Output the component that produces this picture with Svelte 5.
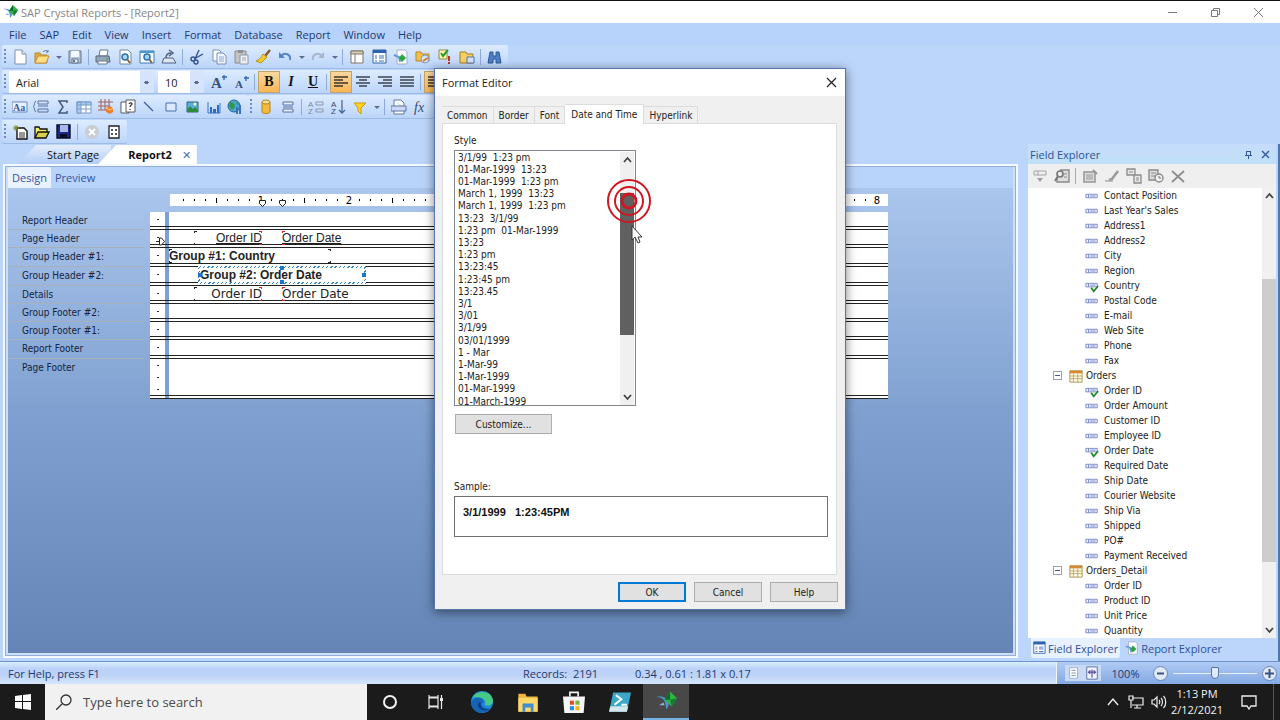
<script lang="ts">
  type Tool = { icon: string; label: string; on?: boolean };

  const icons: Record<string, string> = {
    crystal: '<path d="M1 5c5 0 7 3 7 9 1-1 2-2 2-4C9 6 6 4 1 5z" fill="#4f93c8"/><path d="M3 11l3-2 1 2z" fill="#8fb4e8"/><path d="M11 1l5 5-4 6-5-5z" fill="#2cb548"/><path d="M11 1v6l-4 0z" fill="#0c6b22"/><path d="M11 7l5-1-4 6z" fill="#12802b"/>',
    new: '<path d="M3 1h7l4 4v10H3z" fill="#fff" stroke="#7c8fb0"/><path d="M10 1v4h4" fill="#dfe8f7" stroke="#7c8fb0"/>',
    open: '<path d="M1 14V4h5l1 2h6v8z" fill="#e6a93c" stroke="#b98427"/><path d="M1 14l3-7h11l-3 7z" fill="#ffdf86" stroke="#c69334"/><path d="M9 3c2-2 4-2 5 0m0-2v2h-2" fill="none" stroke="#54719e"/>',
    save: '<path d="M2 2h12v12H2z" fill="#b4c2d6" stroke="#66758e"/><path d="M4 2h8v6H4z" fill="#f5f8fd"/><path d="M5 10h6v4H5z" fill="#e4eaf3" stroke="#66758e"/><path d="M6 11h2v2H6z" fill="#66758e"/>',
    print: '<path d="M5 1h8l-1 6H4z" fill="#fff" stroke="#6b7a94"/><path d="M1 7h13l1 6H1z" fill="#96a6bd" stroke="#56647c"/><path d="M3 12h9v3H3z" fill="#fff" stroke="#6b7a94"/><path d="M11 9h2v2h-2z" fill="#54b44c"/>',
    pagefind: '<path d="M3 1h8l3 3v11H3z" fill="#fff" stroke="#7488ac"/><circle cx="8" cy="8" r="3" fill="#a6d8f2" stroke="#2774ae" stroke-width="1.5"/><path d="M10 10l3 4" stroke="#8b6440" stroke-width="2"/>',
    preview: '<path d="M1 2h14v12H1z" fill="#fff" stroke="#3a7ab4"/><path d="M1 2h14v2H1z" fill="#4b97d1"/><circle cx="8" cy="8" r="3" fill="#9fd5ef" stroke="#2774ae" stroke-width="1.5"/><path d="M10 10l3 4" stroke="#8b6440" stroke-width="2"/>',
    export: '<path d="M3 9h9l3 5H1z" fill="#dfe7f2" stroke="#4f6284"/><path d="M5 9c0-4 2-5 5-5m-2-3l4 3-4 3" fill="none" stroke="#4f6284" stroke-width="1.5"/>',
    cut: '<path d="M10 1L6 10M14 5L5 10" stroke="#35548c" stroke-width="1.4"/><circle cx="4" cy="10" r="2" fill="none" stroke="#35548c" stroke-width="1.4"/><circle cx="7" cy="13" r="2" fill="none" stroke="#35548c" stroke-width="1.4"/>',
    copy: '<path d="M2 1h6l2 2v9H2z" fill="#fff" stroke="#7b90b6"/><path d="M6 4h6l3 3v8H6z" fill="#f1f6ff" stroke="#7b90b6"/><path d="M8 8h5M8 10h5M8 12h5" stroke="#8ea6cf"/>',
    paste: '<path d="M2 2h11v12H2z" fill="#c5c4c0" stroke="#8c8d90"/><path d="M5 1h5v3H5z" fill="#8c9096"/><path d="M7 6h8v9H7z" fill="#eceef2" stroke="#9199a8"/><path d="M9 9h4M9 11h4" stroke="#a3a9b5"/>',
    brush: '<path d="M15 1l-5 6" stroke="#8a5b2c" stroke-width="2.5"/><path d="M8 5l4 3-6 6-5-2c3-1 5-3 7-7z" fill="#f4cc2c" stroke="#b8911c"/>',
    undo: '<path d="M4 7c4-4 10-2 9 4" fill="none" stroke="#5784cf" stroke-width="2"/><path d="M2 3v6h6z" fill="#5784cf"/>',
    redo: '<path d="M12 7C8 3 2 5 3 11" fill="none" stroke="#a9b5c9" stroke-width="2"/><path d="M14 3v6H8z" fill="#a9b5c9"/>',
    grid: '<path d="M2 2h12v12H2z" fill="#fff" stroke="#817767"/><path d="M2 2h12v3H2z" fill="#d9cfb8" stroke="#817767"/><path d="M6 5v9" stroke="#817767"/>',
    fields: '<path d="M2 1h13v13H2z" fill="#fff" stroke="#2f62ae"/><path d="M2 1h13v3H2z" fill="#2f62ae"/><path d="M4 7h2M4 9h2M4 12h2" stroke="#3d70b5"/><path d="M8 7h5M8 9h5M8 12h5" stroke="#3d70b5"/>',
    repexp: '<path d="M4 1h8l2 2v12H4z" fill="#fff" stroke="#a3aec4"/><path d="M1 6l5 2 1 5" fill="none" stroke="#6a9ad4" stroke-width="2"/><path d="M9 5l4 4-4 4-3-4z" fill="#27a63b"/>',
    repository: '<path d="M1 3h5l1 2h7v7H1z" fill="#f2c14c" stroke="#b88624"/><circle cx="10" cy="10" r="4" fill="#d7e4f4" stroke="#8797b0"/><path d="M8 12l5-3" stroke="#d08024" stroke-width="2"/>',
    depend: '<path d="M2 1h8v9H2z" fill="#fff6b0" stroke="#8e8b3a"/><path d="M4 4l2 3 5-6" fill="none" stroke="#2d9a35" stroke-width="2"/><path d="M12 7v5M12 13v2" stroke="#c62f2c" stroke-width="2"/>',
    workbench: '<path d="M1 3h6l1 2h6v9H1z" fill="#f6cf66" stroke="#a97b22"/><path d="M8 8h7v6H8z" fill="#d3e4fa" stroke="#4f75b4"/>',
    find: '<path d="M3 3h3v4h3V3h3l2 11H9v-4H6v4H1z" fill="#4f80c5" stroke="#2e5899"/>',
    grow: '<text x="0" y="14" font-family="Liberation Serif" font-weight="bold" font-size="15" fill="#35527f">A</text><path d="M13 1v5M11 3h5" stroke="#2e66ad" stroke-width="1.3"/>',
    shrink: '<text x="2" y="14" font-family="Liberation Serif" font-weight="bold" font-size="11" fill="#35527f">A</text><path d="M13 2v5M11 4h5" stroke="#2e66ad" stroke-width="1.3"/>',
    left: '<path d="M1 3h14M1 6h9M1 9h14M1 12h9" stroke="#3b372f" stroke-width="1.6"/>',
    center: '<path d="M1 3h14M4 6h8M1 9h14M4 12h8" stroke="#3c4452" stroke-width="1.6"/>',
    right: '<path d="M1 3h14M6 6h9M1 9h14M6 12h9" stroke="#3c4452" stroke-width="1.6"/>',
    justify: '<path d="M1 3h14M1 6h14M1 9h14M1 12h14" stroke="#3c4452" stroke-width="1.6"/>',
    text: '<path d="M0 3h15v10H0z" fill="#e9f1ff" stroke="#6a88c0"/><text x="1" y="12" font-family="Liberation Serif" font-size="10" font-weight="bold" fill="#3b5fa4">Aa</text>',
    group: '<path d="M5 2h10v3H5zM5 7h10M5 10h10v3H5zM3 2c-2 0-1 5-3 5.500 2 0 1 5.500 3 5.500" fill="none" stroke="#58709c"/>',
    sum: '<path d="M12 4V2H4l4 6-4 6h8v-2" fill="none" stroke="#41597f" stroke-width="1.5"/>',
    crosstab: '<path d="M1 3h14v11H1z" fill="#fff" stroke="#7b9cc8"/><path d="M1 3h14v3H1zM1 3h4v11H1z" fill="#a5cbee" stroke="#7b9cc8"/><path d="M10 3v11M1 10h14" stroke="#7b9cc8"/>',
    olap: '<path d="M3 0v11M7 0v11M11 0v8M0 3h15M0 7h12M0 11h8" stroke="#9e605a"/><path d="M8 9l4-2 3 2v4l-3 2-4-2z" fill="#ee7e2c"/><path d="M8 9l4 2 3-2" fill="none" stroke="#fbcf9d"/>',
    sub: '<path d="M1 3h8v11H1z" fill="#fff" stroke="#595a5c"/><path d="M6 1h9v12H6z" fill="#fff" stroke="#595a5c"/><path d="M9 5c1-2 3-1 3 0s-2 1-2 3M10 10v1" fill="none" stroke="#333" stroke-width="1.300"/>',
    line: '<path d="M3 3l9 9" stroke="#3c5ca0" stroke-width="1.3"/>',
    box: '<path d="M3 4h10v8H3z" fill="#dce9ff" stroke="#4a6cb2"/>',
    picture: '<path d="M3 3h11v10H3z" fill="#58b1df" stroke="#31637c"/><path d="M3 11l3-4 3 3 2-2 3 3v2H3z" fill="#2e8a3d"/><circle cx="11" cy="5" r="1.500" fill="#fff6a4"/>',
    chart: '<path d="M2 3v11h12V4" fill="none" stroke="#3c73bc"/><path d="M4 8h2v6H4zM7 10h3v4H7zM11 6h2v8h-2z" fill="#2a6cc2"/>',
    map: '<circle cx="7" cy="7" r="6" fill="#48a7db" stroke="#25658e"/><path d="M3 3l4 1 1 4-3 3-3-4zM9 2l3 3-2 1z" fill="#33984a"/><path d="M9 8h2v7H9zM12 6h2v9h-2z" fill="#3c6fb4"/>',
    db: '<path d="M4 3v10c0 2 8 2 8 0V3z" fill="#f3bc3d" stroke="#b3811e"/><ellipse cx="8" cy="3" rx="4" ry="2" fill="#ffe59a" stroke="#b3811e"/>',
    section: '<path d="M3 3h10v3H3zM3 8h10M3 10h10v3H3z" fill="#e3edff" stroke="#5a71a2"/>',
    gsort: '<text x="0" y="8" font-family="Liberation Sans" font-size="8" fill="#7b879d">A</text><text x="0" y="15" font-family="Liberation Sans" font-size="8" fill="#7b879d">Z</text><path d="M8 3h7v3H8zM8 10h7v3H8z" fill="none" stroke="#8b97ac"/>',
    sort: '<text x="1" y="8" font-family="Liberation Sans" font-size="8" fill="#34496d">A</text><text x="1" y="15" font-family="Liberation Sans" font-size="8" fill="#34496d">Z</text><path d="M12 1v13M9 11l3 3 3-3" fill="none" stroke="#4a679a" stroke-width="1.300"/>',
    filter: '<path d="M2 4h12l-5 5v6l-3-3V9z" fill="#ffd21e" stroke="#c99a12"/>',
    hyper: '<path d="M3 1h7l3 3v4M13 12v3H3V1" fill="#fff" stroke="#63789e"/><path d="M0 7h15v5H0z" fill="#cbdaf1" stroke="#5a74a6"/>',
    fx: '<text x="1" y="13" font-family="Liberation Serif" font-style="italic" font-size="14" fill="#3d4b66">fx</text>',
    wnew: '<path d="M5 4h7l3 3v8H5z" fill="#fff" stroke="#111" stroke-width="1.400"/><path d="M7 9h6M7 11h6M7 13h6" stroke="#333"/><path d="M4 1v6M1 4h6M2 2l4 4M6 2L2 6" stroke="#7f8a28"/>',
    wopen: '<path d="M1 14V3h4l1 2h7v3" fill="#f5ee6a" stroke="#111" stroke-width="1.300"/><path d="M1 14l3-6h11l-3 6z" fill="#d8cf4c" stroke="#111" stroke-width="1.300"/>',
    wsave: '<path d="M1 1h13v13H1z" fill="#1a2a86" stroke="#0a0a26" stroke-width="1.400"/><path d="M4 1h8v7H4z" fill="#a9b8e8"/><path d="M4 10h7v4H4z" fill="#0b0b22"/>',
    stop: '<circle cx="8" cy="8" r="7" fill="#c9ccd1"/><path d="M5 5l6 6M11 5l-6 6" stroke="#fff" stroke-width="2"/>',
    props: '<path d="M3 2h10v12H3z" fill="#fff" stroke="#222" stroke-width="1.300"/><path d="M5 6h2M5 10h2M9 6h2M9 10h2" stroke="#222" stroke-width="1.500"/>',
    insert: '<path d="M2 3h12v4H2zM6 3v4" fill="none" stroke="#a3a3a3"/><path d="M5 10h6l-3 4z" fill="#9d9d9d"/>',
    browse: '<path d="M6 2h9v12H3V9" fill="#ddd" stroke="#8c8c8c" stroke-width="1.400"/><path d="M10 6h3M10 9h3" stroke="#8c8c8c"/><circle cx="6" cy="6" r="3" fill="#eee" stroke="#777" stroke-width="1.700"/><path d="M4 8l-3 5" stroke="#777" stroke-width="2"/>',
    addform: '<path d="M2 4h11v10H2z" fill="#ddd" stroke="#969696" stroke-width="1.500"/><path d="M4 7h7M4 9h7M4 11h7" stroke="#999"/><path d="M11 2l4 4" stroke="#999" stroke-width="2"/>',
    edit: '<path d="M14 3l-6 8-3 1" fill="none" stroke="#999" stroke-width="2.500"/><path d="M1 13h8" stroke="#aaa" stroke-width="1.500"/>',
    dup: '<path d="M1 1h8v6H1zM8 7h7v8H8z" fill="#e6e6e6" stroke="#8b8b8b" stroke-width="1.300"/><path d="M3 4h4M10 10h3M10 12h3" stroke="#8b8b8b"/>',
    rename: '<path d="M1 2h9v10H1z" fill="#ddd" stroke="#8b8b8b" stroke-width="1.400"/><path d="M3 5h5M3 8h5" stroke="#8b8b8b"/><circle cx="11" cy="10" r="4" fill="#f0f0f0" stroke="#8b8b8b" stroke-width="1.400"/><path d="M11 8v2h2" fill="none" stroke="#777"/>',
    del: '<path d="M2 3l12 11M14 3L2 14" stroke="#8c8c8c" stroke-width="1.700"/>',
    field: '<path d="M1 6h13v4H1z" fill="#eaf0ff" stroke="#7384c4"/><path d="M4 6v4M6 8h6" stroke="#7384c4"/>',
    checked: '<path d="M1 5h13v4H1z" fill="#eaf0ff" stroke="#7384c4"/><path d="M4 5v4M6 7h6" stroke="#7384c4"/><path d="M7 10l3 4 5-6" fill="none" stroke="#1f8a2b" stroke-width="2"/>',
    table: '<path d="M1 2h14v13H1z" fill="#fffde8" stroke="#a48a48"/><path d="M1 2h14v3H1z" fill="#d58a32"/><path d="M1 8h14M1 11h14M5 5v10M10 5v10" stroke="#b9a565"/>',
    ring: '<circle cx="8" cy="8" r="6" fill="none" stroke="#f2f2f2" stroke-width="2"/>',
    taskview: '<path d="M1 4h9v8H1zM1 1v2h9V1M1 15v-2h9v2" fill="none" stroke="#e6e6e6" stroke-width="1.200"/><path d="M13.500 1v14" stroke="#e6e6e6" stroke-width="1.200"/><path d="M12 4h3v3h-3z" fill="#e6e6e6"/>',
    edge: '<circle cx="8" cy="8" r="8" fill="#1c87d6"/><path d="M1 5c3-6 14-6 15 2 0 4-5 4-6 3 2-4-4-7-9-5z" fill="#45c985"/><path d="M0 9c1-5 9-5 9-1-2 1-2 5 5 5-4 5-13 3-14-4z" fill="#1464b4"/><path d="M7 8c-1 4 3 6 7 5-3 2-9 1-9-3 0-1 1-2 2-2z" fill="#0b3f86"/>',
    folder: '<path d="M1 2h5l1 2h8v11H1z" fill="#f0b53c"/><path d="M1 5h14v10H1z" fill="#ffd869"/><path d="M4 15V9h8v6h-2v-3H6v3z" fill="#3f8ed1"/>',
    store: '<path d="M5 4V1h6v3" fill="none" stroke="#f3f3f3" stroke-width="1.200"/><path d="M0 4h16l-1 12H1z" fill="#f5f5f5"/><path d="M5 7h3v3H5z" fill="#e34f2f"/><path d="M9 7h3v3H9z" fill="#7db53a"/><path d="M5 11h3v3H5z" fill="#2b8fdb"/><path d="M9 11h3v3H9z" fill="#f5b322"/>',
    shell: '<path d="M3 1h13l-3 14H0z" fill="#3aa9c9"/><path d="M1 11h13l-1 4H0z" fill="#d5e6ed"/><path d="M5 3l4 3-5 4M9 10h4" fill="none" stroke="#fff" stroke-width="1.400"/>',
    up: '<path d="M3 11l5-6 5 6" fill="none" stroke="#eee" stroke-width="1.400"/>',
    net: '<path d="M4 4h11v7H4M9 11v3M6 14h7M1 2h4v4H1zM3 6v8" fill="none" stroke="#eee" stroke-width="1.200"/>',
    volume: '<path d="M1 6h2l3-3v10l-3-3H1z" fill="none" stroke="#eee" stroke-width="1.200"/><path d="M8 6c1 1 1 3 0 4M10 4c2 2 2 6 0 8M12.500 2c3 3 3 9 0 12" fill="none" stroke="#eee" stroke-width="1.200"/>',
    notice: '<path d="M1 2h14v10h-5l-2 3-2-3H1z" fill="none" stroke="#eee" stroke-width="1.300"/>',
    search: '<circle cx="10" cy="6" r="5" fill="none" stroke="#333" stroke-width="1.300"/><path d="M6 10l-6 6" stroke="#333" stroke-width="1.300"/>',
    windows: '<path d="M0 2l7-1v6H0zM8 1l8-1v7H8zM0 8h7v7l-7-1zM8 8h8v8l-8-1z" fill="#fff"/>',
    page: '<path d="M3 2h9v12H3z" fill="#fff" stroke="#9aabca"/><path d="M5 5h5M5 8h5M5 11h5" stroke="#6f88b8"/>',
    pagefit: '<path d="M2 1h12v14H2z" fill="#f1f5ff" stroke="#51679a"/><path d="M4 7h8M8 4v9M6 5L4 7l2 2M10 5l2 2-2 2" fill="none" stroke="#5a4c9c" stroke-width="1.300"/>'
  };

  const menus = ['File', 'SAP', 'Edit', 'View', 'Insert', 'Format', 'Database', 'Report', 'Window', 'Help'];

  // '|' draws a separator, 'v' a drop-down arrow
  const standard: (Tool | string)[] = [
    { icon: 'new', label: 'New' }, { icon: 'open', label: 'Open' }, 'v', { icon: 'save', label: 'Save' }, '|',
    { icon: 'print', label: 'Print' }, { icon: 'pagefind', label: 'Print preview' },
    { icon: 'preview', label: 'HTML preview' }, { icon: 'export', label: 'Export' }, '|',
    { icon: 'cut', label: 'Cut' }, { icon: 'copy', label: 'Copy' }, { icon: 'paste', label: 'Paste' },
    { icon: 'brush', label: 'Format painter' }, { icon: 'undo', label: 'Undo' }, 'v',
    { icon: 'redo', label: 'Redo' }, 'v', '|',
    { icon: 'grid', label: 'Toggle group tree' }, { icon: 'fields', label: 'Field explorer' },
    { icon: 'repexp', label: 'Report explorer' }, { icon: 'repository', label: 'Repository explorer' },
    { icon: 'depend', label: 'Dependency checker' }, { icon: 'workbench', label: 'Workbench' }, '|',
    { icon: 'find', label: 'Find' }
  ];
  const sizing: Tool[] = [{ icon: 'grow', label: 'Increase font size' }, { icon: 'shrink', label: 'Decrease font size' }];
  const aligns: Tool[] = [
    { icon: 'left', label: 'Align left', on: true }, { icon: 'center', label: 'Align centre' },
    { icon: 'right', label: 'Align right' }, { icon: 'justify', label: 'Justify' }
  ];
  const objects: Tool[] = [
    { icon: 'text', label: 'Text object' }, { icon: 'group', label: 'Group' }, { icon: 'sum', label: 'Summary' },
    { icon: 'crosstab', label: 'Cross-tab' }, { icon: 'olap', label: 'OLAP grid' }, { icon: 'sub', label: 'Subreport' },
    { icon: 'line', label: 'Line' }, { icon: 'box', label: 'Box' }, { icon: 'picture', label: 'Picture' },
    { icon: 'chart', label: 'Chart' }, { icon: 'map', label: 'Map' }
  ];
  const experts: (Tool | string)[] = [
    { icon: 'db', label: 'Database expert' }, { icon: 'section', label: 'Section expert' }, '|',
    { icon: 'gsort', label: 'Group sort' }, { icon: 'sort', label: 'Record sort' }, { icon: 'filter', label: 'Select expert' }, 'v', '|',
    { icon: 'hyper', label: 'Hyperlink' }, { icon: 'fx', label: 'Formula workshop' }
  ];
  const wizard: (Tool | string)[] = [
    { icon: 'wnew', label: 'New document' }, { icon: 'wopen', label: 'Open document' }, { icon: 'wsave', label: 'Save document' }, '|',
    { icon: 'stop', label: 'Stop' }, { icon: 'props', label: 'Properties' }
  ];
  const fieldTools: (Tool | string)[] = [
    { icon: 'insert', label: 'Insert to report' }, { icon: 'browse', label: 'Browse data' }, '|',
    { icon: 'addform', label: 'New' }, { icon: 'edit', label: 'Edit' }, { icon: 'dup', label: 'Duplicate' },
    { icon: 'rename', label: 'Rename' }, { icon: 'del', label: 'Delete' }
  ];

  const sections = [
    { name: 'Report Header', height: 18 },
    { name: 'Page Header', height: 18 },
    { name: 'Group Header #1:', height: 19 },
    { name: 'Group Header #2:', height: 19 },
    { name: 'Details', height: 18 },
    { name: 'Group Footer #2:', height: 18 },
    { name: 'Group Footer #1:', height: 18 },
    { name: 'Report Footer', height: 19 },
    { name: 'Page Footer', height: 40 }
  ];

  const styles = [
    '3/1/99  1:23 pm', '01-Mar-1999  13:23', '01-Mar-1999  1:23 pm', 'March 1, 1999  13:23',
    'March 1, 1999  1:23 pm', '13:23  3/1/99', '1:23 pm  01-Mar-1999', '13:23', '1:23 pm', '13:23:45',
    '1:23:45 pm', '13:23.45', '3/1', '3/01', '3/1/99', '03/01/1999', '1 - Mar', '1-Mar-99', '1-Mar-1999',
    '01-Mar-1999', '01-March-1999'
  ].map((s) => s.replaceAll('  ', '\u00a0 '));

  const tree = [
    { fields: ['Contact Position', "Last Year's Sales", 'Address1', 'Address2', 'City', 'Region', 'Country', 'Postal Code', 'E-mail', 'Web Site', 'Phone', 'Fax'], used: ['Country'] },
    { table: 'Orders', fields: ['Order ID', 'Order Amount', 'Customer ID', 'Employee ID', 'Order Date', 'Required Date', 'Ship Date', 'Courier Website', 'Ship Via', 'Shipped', 'PO#', 'Payment Received'], used: ['Order ID', 'Order Date'] },
    { table: 'Orders_Detail', fields: ['Order ID', 'Product ID', 'Unit Price', 'Quantity'], used: [] as string[] }
  ];

  const tabs = ['Common', 'Border', 'Font', 'Date and Time', 'Hyperlink'];
  const apps = ['ring', 'taskview', 'edge', 'folder', 'store', 'shell', 'crystal'];

  let activeTab = $state('Date and Time');
  let zoom = $state(50);

  // eighths of an inch along the ruler, 11px each
  const ticks = Array.from({ length: 64 }, (_, i) => i + 1);
</script>

{#snippet icon(name: string, size = 16)}
  <svg class="icon" width={size} height={size} viewBox="0 0 16 16" aria-hidden="true">{@html icons[name]}</svg>
{/snippet}

{#snippet tools(items: (Tool | string)[])}
  {#each items as item}
    {#if item === '|'}
      <span class="sep"></span>
    {:else if item === 'v'}
      <button class="drop" aria-label="More"></button>
    {:else if typeof item !== 'string'}
      <button class="tool" class:on={item.on} aria-label={item.label}>{@render icon(item.icon)}</button>
    {/if}
  {/each}
{/snippet}

{#snippet chevron(d: string)}
  <svg width="9" height="9" viewBox="0 0 9 9" aria-hidden="true"><path {d} fill="none" stroke="#444" stroke-width="1.800" /></svg>
{/snippet}

<div class="screen">
  <header class="title-bar">
    {@render icon('crystal')}
    <span class="title">SAP Crystal Reports - [Report2]</span>
    <button aria-label="Minimize"><svg width="11" height="11"><path d="M1 5.500h9" stroke="#777" /></svg></button>
    <button aria-label="Restore"><svg width="11" height="11"><path d="M1.500 3.500h6v6h-6zM3.500 3V1.500h6v6H8" fill="none" stroke="#777" /></svg></button>
    <button aria-label="Close"><svg width="11" height="11"><path d="M1 1l9 9M10 1l-9 9" stroke="#777" /></svg></button>
  </header>

  <nav class="menu">
    {#each menus as item}
      <button>{item}</button>
    {/each}
  </nav>

  <div class="toolbars">
    <div class="bar"><span class="grip"></span>{@render tools(standard)}</div>
    <div class="bar">
      <span class="grip"></span>
      <select class="font-name" aria-label="Font"><option>Arial</option></select>
      <select class="font-size" aria-label="Font size"><option>10</option></select>
      {@render tools(sizing)}
      <span class="sep"></span>
      <button class="tool letter on"><b>B</b></button>
      <button class="tool letter"><i>I</i></button>
      <button class="tool letter"><u>U</u></button>
      <span class="sep"></span>
      {@render tools(aligns)}
      <span class="sep"></span>
      <button class="tool on" aria-label="Suppress">{@render icon('left')}</button>
    </div>
    <div class="bar-row">
      <div class="bar objects"><span class="grip"></span>{@render tools(objects)}</div>
      <div class="bar"><span class="grip"></span>{@render tools(experts)}</div>
    </div>
    <div class="bar"><span class="grip"></span>{@render tools(wizard)}</div>
  </div>

  <main>
    <section class="documents">
      <div class="doc-tabs">
        <button class="doc-tab">Start Page</button>
        <button class="doc-tab current">Report2 <span>✕</span></button>
      </div>
      <div class="frame">
        <div class="views">
          <button class="current">Design</button>
          <button>Preview</button>
        </div>
        <div class="canvas">
          <div class="ruler">
            <svg width="100%" height="12" aria-hidden="true">
              {#each ticks as t}
                {#if t % 8 === 0}
                  <text x={t * 11 + 3} y="10" text-anchor="middle">{t / 8}</text>
                {:else if t % 4 === 0}
                  <rect x={t * 11 + 2} y="4" width="1" height="5" />
                {:else}
                  <rect x={t * 11 + 2} y="5" width="1" height="2" />
                {/if}
              {/each}
            </svg>
            <svg class="stops" width="30" height="10" aria-hidden="true">
              <path d="M1.500 1.500h6v3l-3 3-3-3zM21.500 1.500h6v3l-3 3-3-3z" fill="#fff" stroke="#222" />
            </svg>
          </div>
          <div class="sections">
            {#each sections as s}
              <div class="section" style="height: {s.height}px">
                <span class="name">{s.name}</span>
                <span class="gutter">{#each Array(Math.floor(s.height / 12)) as _}<i></i>{/each}</span>
                <span class="paper"></span>
              </div>
            {/each}
            <svg class="handle" width="10" height="10" aria-hidden="true"><path d="M0 4.500h3M3.500 1v7h2l3-3.500-3-3.500z" fill="#fff" stroke="#222" /></svg>
            <span class="obj under number" style="left: 186px; top: 19px; width: 68px">Order ID</span>
            <span class="obj under date" style="left: 274px; top: 19px; width: 160px">Order Date</span>
            <span class="obj bold" style="left: 161px; top: 37px; width: 162px">Group #1: Country</span>
            <span class="obj bold selected" style="left: 190px; top: 54px; width: 168px">Group #2: Order Date</span>
            <span class="obj plain number" style="left: 186px; top: 75px; width: 68px">Order ID</span>
            <span class="obj plain date" style="left: 274px; top: 75px; width: 160px">Order Date</span>
          </div>
        </div>
      </div>
    </section>

    <aside>
      <div class="panel-title">
        <span>Field Explorer</span>
        <button aria-label="Pin"><svg width="9" height="9"><path d="M2.500 1v4M6.500 1v4M2 1.500h5M1 5.500h7M4.500 6v3" fill="none" stroke="#35589b" /></svg></button>
        <button aria-label="Close panel"><svg width="9" height="9"><path d="M1 1l7 7M8 1L1 8" stroke="#35589b" stroke-width="1.400" /></svg></button>
      </div>
      <div class="panel-tools">{@render tools(fieldTools)}</div>
      <div class="tree-box">
        <ul class="tree">
          {#each tree as group}
            {#if group.table}
              <li class="table-row">
                <button class="expander" aria-label="Collapse"></button>
                {@render icon('table', 14)}
                <span>{group.table}</span>
              </li>
            {/if}
            {#each group.fields as field}
              <li>{@render icon(group.used.includes(field) ? 'checked' : 'field', 14)}<span>{field}</span></li>
            {/each}
          {/each}
        </ul>
        <div class="scroll">
          {@render chevron('M1 6l3.500-4L8 6')}
          <div class="track"><span class="thumb tree-thumb"></span></div>
          {@render chevron('M1 3l3.500 4L8 3')}
        </div>
      </div>
      <div class="panel-tabs">
        <button class="current">{@render icon('fields', 14)}Field Explorer</button>
        <button>{@render icon('repexp', 14)}Report Explorer</button>
      </div>
    </aside>
  </main>

  <footer class="status">
    <span class="help">For Help, press F1</span>
    <span class="records">Records:&nbsp; 2191</span>
    <span class="coords">0.34 , 0.61 : 1.81 x 0.17</span>
    <div class="zoom">
      <button class="page" aria-label="Whole page">{@render icon('page', 14)}</button>
      <button class="page" aria-label="Page width">{@render icon('pagefit', 14)}</button>
      <span class="percent">100%</span>
      <button class="round" aria-label="Zoom out"><svg width="9" height="9"><path d="M1 4.500h7" stroke="#3d5480" stroke-width="2" /></svg></button>
      <input type="range" aria-label="Zoom" bind:value={zoom} />
      <button class="round" aria-label="Zoom in"><svg width="9" height="9"><path d="M0 4.500h9M4.500 0v9" stroke="#3d5480" stroke-width="2" /></svg></button>
    </div>
  </footer>

  <div class="taskbar">
    <button class="start" aria-label="Start">{@render icon('windows')}</button>
    <label class="search">
      {@render icon('search')}
      <input type="text" placeholder="Type here to search" aria-label="Search" />
    </label>
    {#each apps as app}
      <button class="app" class:running={app === 'crystal'} aria-label={app}>
        {@render icon(app, ['ring', 'taskview'].includes(app) ? 16 : 22)}
      </button>
    {/each}
    <div class="tray">
      <button aria-label="Hidden icons">{@render icon('up')}</button>
      <button aria-label="Network">{@render icon('net')}</button>
      <button aria-label="Volume">{@render icon('volume')}</button>
      <div class="clock">1:13 PM<br />2/12/2021</div>
      <button class="notice" aria-label="Notifications">{@render icon('notice')}</button>
    </div>
  </div>

  <div class="dialog" role="dialog" aria-label="Format Editor">
    <div class="dialog-title">
      <span>Format Editor</span>
      <button aria-label="Close dialog"><svg width="11" height="11"><path d="M1 1l9 9M10 1l-9 9" stroke="#222" stroke-width="1.200" /></svg></button>
    </div>
    <div class="dialog-tabs" role="tablist">
      {#each tabs as tab}
        <button role="tab" aria-selected={tab === activeTab} class:active={tab === activeTab} onclick={() => (activeTab = tab)}>{tab}</button>
      {/each}
    </div>
    <div class="tab-page">
      <label class="caption" for="style-list">Style</label>
      <div class="list-box">
        <select id="style-list" size="21">
          {#each styles as s}
            <option>{s}</option>
          {/each}
        </select>
        <div class="scroll">
          {@render chevron('M1 6l3.500-4L8 6')}
          <div class="track"><span class="thumb list-thumb"></span></div>
          {@render chevron('M1 3l3.500 4L8 3')}
        </div>
        <svg class="click" width="46" height="46" aria-hidden="true">
          <g fill="none" stroke="#cf1722" stroke-width="2"><circle cx="23" cy="23" r="21" /><circle cx="23" cy="23" r="14" /><circle cx="23" cy="23" r="7" stroke-width="3" /></g>
        </svg>
        <svg class="pointer" width="13" height="19" aria-hidden="true">
          <path d="M1 1v14l3-3 3 6 2-1-2-5h4z" fill="#fff" stroke="#333" />
        </svg>
      </div>
      <button class="push customize">Customize...</button>
      <span class="caption">Sample:</span>
      <output>3/1/1999&nbsp;&nbsp; 1:23:45PM</output>
    </div>
    <div class="actions">
      <button class="push default">OK</button>
      <button class="push">Cancel</button>
      <button class="push">Help</button>
    </div>
  </div>
</div>

<style>
  :global(body) {
    margin: 0;
  }

  .screen {
    --ui: 'Open Sans', 'Noto Sans', sans-serif;
    --small: 'DejaVu Sans Condensed', 'DejaVu Sans', sans-serif;
    position: relative;
    display: flex;
    flex-direction: column;
    min-height: 100vh;
    overflow: hidden;
    font-family: var(--ui);
    font-size: 11px;
    color: #1e3a70;
    background: #bcd5fb;
  }

  button {
    display: flex;
    align-items: center;
    justify-content: center;
    padding: 0;
    border: 0;
    background: none;
    font: inherit;
    color: inherit;
    white-space: nowrap;
  }

  svg {
    display: block;
    flex: none;
  }

  .title-bar {
    display: flex;
    align-items: center;
    height: 22px;
    padding-left: 2px;
    border-top: 1px solid #111;
    background: #fff;
    color: #868686;
  }

  .title {
    flex: 1;
    padding-left: 3px;
  }

  .title-bar button {
    width: 43px;
    height: 20px;
  }

  .menu {
    display: flex;
    align-items: center;
    gap: 1px;
    height: 22px;
    padding-left: 3px;
    background: #b7d2fb;
  }

  .menu button {
    padding: 0 6px;
  }

  .toolbars {
    display: flex;
    flex-direction: column;
    align-items: flex-start;
    gap: 1px;
    padding-left: 2px;
  }

  .bar-row {
    display: flex;
  }

  .bar {
    display: flex;
    align-items: center;
    height: 24px;
    padding-right: 2px;
    border-radius: 2px;
    box-shadow: inset 0 -1px #9dbbe6;
    background: linear-gradient(#dcebff, #c9defc 60%, #b9d3f8);
  }

  .objects {
    width: 244px;
  }

  .objects .tool {
    flex: 1;
  }

  .grip {
    width: 2px;
    height: 16px;
    margin: 0 3px 0 2px;
    background: repeating-linear-gradient(#6a8bc4 0 2px, transparent 2px 4px);
  }

  .tool {
    width: 22px;
    height: 22px;
  }

  .tool.on {
    background: linear-gradient(#fbd9a0, #f9b452);
    box-shadow: inset 0 0 0 1px #c1a36c;
  }

  .letter {
    font-family: 'Liberation Serif', serif;
    font-size: 14px;
    font-weight: bold;
    color: #111;
  }

  .drop {
    width: 11px;
    height: 22px;
  }

  .drop::before {
    content: '';
    border: 3px solid transparent;
    border-top-color: #5d6f91;
    border-bottom: 0;
  }

  .sep {
    flex: none;
    width: 1px;
    height: 16px;
    margin: 0 3px 0 2px;
    background: #8daadb;
  }

  .bar select {
    appearance: none;
    height: 22px;
    margin-right: 4px;
    padding: 0 7px;
    border: 0;
    border-radius: 0;
    font: inherit;
    color: #222;
    background:
      linear-gradient(#5d6f91, #5d6f91) right 5px center / 5px 1px no-repeat,
      linear-gradient(#5d6f91, #5d6f91) right 6px center / 3px 3px no-repeat,
      linear-gradient(#d5e4fa, #d5e4fa) right / 14px 100% no-repeat,
      #fff;
  }

  .font-name {
    width: 145px;
  }

  .font-size {
    width: 46px;
  }

  main {
    flex: 1;
    display: flex;
    border-right: 2px solid #4d77ad;
  }

  .documents {
    flex: 1;
    display: flex;
    flex-direction: column;
    min-width: 0;
  }

  .doc-tabs {
    display: flex;
    align-items: flex-end;
    height: 20px;
    padding-left: 18px;
    color: #111;
  }

  .doc-tab {
    height: 19px;
    padding: 0 12px 0 29px;
    clip-path: polygon(18px 0, 100% 0, 100% 100%, 0 100%);
    background: linear-gradient(#e3eefe, #b3cdf5);
  }

  .doc-tab.current {
    margin-left: -13px;
    padding: 0 6px 0 30px;
    font-weight: bold;
    background: #fff;
  }

  .doc-tab span {
    padding-left: 10px;
    font-weight: normal;
    color: #4a70b0;
  }

  .frame {
    flex: 1;
    display: flex;
    flex-direction: column;
    padding: 1px 3px 3px;
    margin: 0 2px 3px 3px;
    border: 2px solid #f4f8ff;
    outline: 1px solid #93aed8;
    outline-offset: -3px;
    background: #cddffa;
  }

  .views {
    display: flex;
    height: 21px;
    background: #b9d4fb;
    color: #3552a0;
  }

  .views button {
    padding: 0 4px;
  }

  .views .current {
    border-radius: 2px 2px 0 0;
    background: #eaf2ff;
  }

  .canvas {
    flex: 1;
    padding: 6px 125px 0 0;
    background: linear-gradient(#abc6ed, #7e9fcf 50%, #6485b6);
  }

  .ruler {
    position: relative;
    height: 12px;
    margin: 0 0 6px 162px;
    background: #fff;
    font-family: 'DejaVu Sans', sans-serif;
    font-size: 10px;
  }

  .stops {
    position: absolute;
    left: 88px;
    top: 5px;
  }

  .sections {
    position: relative;
    font-family: 'Liberation Sans', sans-serif;
    color: #16243d;
  }

  .section {
    display: flex;
  }

  .name {
    flex: none;
    box-sizing: border-box;
    width: 136px;
    margin-right: 6px;
    padding-left: 14px;
    border-bottom: 1px solid #a5b2bc;
    font-family: var(--small);
    font-size: 10px;
    line-height: 17px;
  }

  .section:last-of-type .name {
    border: 0;
  }

  .gutter,
  .paper {
    box-sizing: border-box;
    border-bottom: 4px double #222;
    background: #fff;
  }

  .gutter {
    flex: none;
    display: flex;
    flex-direction: column;
    justify-content: space-around;
    align-items: center;
    width: 19px;
    padding-right: 4px;
    background: linear-gradient(90deg, #fff 15px, #7b9fd6 15px);
  }

  .gutter i {
    width: 2px;
    height: 1px;
    background: #333;
  }

  .paper {
    flex: 1;
  }

  .handle {
    position: absolute;
    left: 148px;
    top: 25px;
  }

  .obj {
    --start: #222;
    --end: #222;
    position: absolute;
    box-sizing: border-box;
    height: 14px;
    line-height: 14px;
    white-space: nowrap;
    color: #222;
    background:
      linear-gradient(var(--start), var(--start)) left top / 3px 1px no-repeat,
      linear-gradient(var(--start), var(--start)) left bottom / 3px 1px no-repeat,
      linear-gradient(var(--start) 2px, transparent 2px 12px, var(--start) 12px) left top / 1px 100% no-repeat,
      linear-gradient(var(--end), var(--end)) right top / 3px 1px no-repeat,
      linear-gradient(var(--end), var(--end)) right bottom / 3px 1px no-repeat,
      linear-gradient(var(--end) 2px, transparent 2px 12px, var(--end) 12px) right top / 1px 100% no-repeat;
  }

  .number {
    --end: #d22;
    text-align: right;
  }

  .date {
    --start: #d22;
  }

  .under {
    font-size: 12px;
    text-decoration: underline;
  }

  .bold {
    font-size: 12px;
    font-weight: bold;
  }

  .plain {
    font-family: 'DejaVu Sans', sans-serif;
    font-size: 12px;
  }

  .obj.selected {
    height: 18px;
    border: 2px solid transparent;
    background:
      linear-gradient(#1b76c8, #1b76c8) center top / 4px 4px no-repeat border-box,
      linear-gradient(#1b76c8, #1b76c8) center bottom / 4px 4px no-repeat border-box,
      linear-gradient(#fff, #fff) padding-box,
      repeating-linear-gradient(-45deg, #2f87cf 0 1px, #fff 1px 3px) border-box;
  }

  .selected::before,
  .selected::after {
    content: '';
    position: absolute;
    top: 5px;
    width: 4px;
    height: 4px;
    background: #1b76c8;
  }

  .selected::before {
    left: -2px;
  }

  .selected::after {
    right: -2px;
  }

  aside {
    display: flex;
    flex-direction: column;
    width: 248px;
    padding: 0 2px 0 8px;
  }

  .panel-title {
    display: flex;
    align-items: center;
    height: 20px;
    padding: 0 2px;
    background: linear-gradient(#c6dcfb, #bfe0f8);
    color: #2c519c;
  }

  .panel-title span {
    flex: 1;
  }

  .panel-title button {
    width: 17px;
    height: 17px;
  }

  .panel-tools {
    display: flex;
    align-items: center;
    height: 24px;
    padding-left: 1px;
    background: #efefef;
  }

  .tree-box {
    flex: 1;
    display: flex;
    background: #fff;
  }

  .tree {
    flex: 1;
    margin: 0;
    padding: 0;
    list-style: none;
    font-family: var(--small);
    font-size: 10px;
    color: #222;
  }

  .tree li {
    display: flex;
    align-items: center;
    gap: 5px;
    height: 15px;
    padding-left: 57px;
  }

  .tree .table-row {
    gap: 3px;
    padding-left: 25px;
  }

  .expander {
    width: 9px;
    height: 9px;
    margin-right: 4px;
    border: 1px solid #9aa3b4;
    background: linear-gradient(#445a8c, #445a8c) center / 5px 1px no-repeat #fff;
  }

  .scroll {
    flex: none;
    display: flex;
    flex-direction: column;
    align-items: center;
    width: 14px;
    padding: 4px 0;
    background: #f0f0f0;
  }

  .track {
    flex: 1;
    align-self: stretch;
    display: flex;
    flex-direction: column;
    margin: 4px 0;
  }

  .tree-thumb {
    height: 68%;
    margin-top: 74px;
    background: #cdcdcd;
  }

  .list-thumb {
    height: 65%;
    margin-top: 24px;
    background: #606060;
  }

  .panel-tabs {
    display: flex;
    height: 23px;
    padding-left: 3px;
    color: #2c519c;
  }

  .panel-tabs button {
    gap: 2px;
    height: 20px;
    padding: 0 2px 0 1px;
  }

  .panel-tabs button + button {
    margin-left: 4px;
  }

  .panel-tabs .current {
    border-radius: 0 0 3px 3px;
    background: #e8f1ff;
  }

  .status {
    display: flex;
    align-items: center;
    height: 22px;
    padding-left: 8px;
    border-top: 1px solid #6d93c8;
    background: linear-gradient(#d9effb 0, #bdd2f8 30%, #bdd2f8 60%, #d5e6fb);
  }

  .help {
    flex: 515;
  }

  .records {
    flex: 112;
  }

  .coords {
    flex: 421;
  }

  .zoom {
    flex: none;
    display: flex;
    align-items: center;
    box-sizing: border-box;
    width: 224px;
    height: 22px;
    padding: 0 3px 0 8px;
    border-left: 1px solid #f0f6ff;
    background: linear-gradient(#b0cbf4, #84a9e4);
  }

  .page {
    width: 18px;
    height: 16px;
    background: #c9daf4;
  }

  .percent {
    width: 41px;
    text-align: center;
    margin-right: 7px;
    margin-left: 4px;
  }

  .round {
    width: 15px;
    height: 15px;
    border: 1px solid #6c86b4;
    border-radius: 50%;
    background: #dfe9f8;
  }

  .zoom input {
    appearance: none;
    flex: 1;
    min-width: 0;
    height: 14px;
    margin: 0 5px;
    background: linear-gradient(#e6f0ff, #e6f0ff) center / 100% 1px no-repeat;
  }

  .zoom input::-webkit-slider-thumb {
    appearance: none;
    width: 8px;
    height: 12px;
    border: 1px solid #58749f;
    border-radius: 1px 1px 4px 4px;
    background: #dfeafa;
  }

  .taskbar {
    display: flex;
    height: 36px;
    background: #1b1b1b;
    color: #f2f2f2;
  }

  .start {
    width: 45px;
  }

  .search {
    flex: none;
    display: flex;
    align-items: center;
    gap: 11px;
    box-sizing: border-box;
    width: 322px;
    padding-left: 11px;
    background: #f1f1f1;
  }

  .search input {
    flex: 1;
    min-width: 0;
    padding: 0;
    border: 0;
    outline: 0;
    background: none;
    font-family: var(--ui);
    font-size: 13px;
  }

  .search input::placeholder {
    color: #4a4a4a;
  }

  .app {
    width: 46px;
  }

  .running {
    border-bottom: 2px solid #76b2e4;
    background: #484848;
  }

  .tray {
    display: flex;
    align-items: center;
    margin-left: auto;
    padding-right: 6px;
  }

  .tray button {
    width: 23px;
    height: 36px;
  }

  .clock {
    width: 54px;
    text-align: center;
    line-height: 16px;
  }

  .tray .notice {
    width: 50px;
    border-right: 1px solid #555;
  }

  .dialog {
    position: absolute;
    left: 434px;
    top: 68px;
    box-sizing: border-box;
    width: 412px;
    padding: 0 7px 7px;
    border: 1px solid #5477aa;
    background: #f0f0f0;
    box-shadow: 0 2px 10px rgba(0, 0, 0, 0.5);
    font-family: var(--small);
    font-size: 10px;
    color: #222;
  }

  .dialog-title {
    display: flex;
    align-items: center;
    justify-content: space-between;
    height: 27px;
    margin: 0 -7px 8px;
    padding: 0 8px 0 7px;
    background: #fff;
    font-family: var(--ui);
    font-size: 11px;
  }

  .dialog-tabs {
    display: flex;
    align-items: flex-end;
    height: 19px;
  }

  .dialog-tabs button {
    height: 17px;
    padding: 0 5px;
    border: 1px solid #dcdcdc;
    border-bottom: 0;
    border-left: 0;
  }

  .dialog-tabs .active {
    position: relative;
    height: 20px;
    margin: 0 0 -1px;
    padding: 0 6px;
    background: #fff;
  }

  .tab-page {
    display: flex;
    flex-direction: column;
    align-items: flex-start;
    margin-right: 1px;
    padding: 9px 8px 37px 11px;
    border: 1px solid #dcdcdc;
    background: #fff;
  }

  .caption {
    margin-bottom: 2px;
    line-height: 15px;
  }

  .list-box {
    position: relative;
    display: flex;
    box-sizing: border-box;
    width: 182px;
    height: 256px;
    padding: 1px 1px 0 0;
    border: 1px solid #82878f;
  }

  .list-box select {
    flex: 1;
    min-width: 0;
    height: 100%;
    padding: 0;
    border: 0;
    outline: 0;
    overflow: hidden;
    scrollbar-width: none;
    background: #fff;
    font: inherit;
    color: #222;
  }

  .list-box option {
    height: 12px;
    min-height: 0;
    padding: 0 3px;
    line-height: 12px;
  }

  .list-box option:nth-child(5n) {
    height: 13px;
  }

  .click {
    position: absolute;
    left: 151px;
    top: 27px;
  }

  .pointer {
    position: absolute;
    left: 176px;
    top: 74px;
  }

  .push {
    box-sizing: border-box;
    width: 68px;
    height: 20px;
    border: 1px solid #adadad;
    background: #e1e1e1;
  }

  .push.customize {
    width: 97px;
    margin: 8px 0 45px 1px;
  }

  .default {
    border: 2px solid #0078d7;
  }

  output {
    align-self: stretch;
    height: 30px;
    padding: 9px 8px 0;
    border: 1px solid #707070;
    font-family: 'Liberation Sans', sans-serif;
    font-size: 11px;
    font-weight: bold;
    color: #111;
  }

  .actions {
    display: flex;
    justify-content: flex-end;
    gap: 8px;
    padding-top: 7px;
  }
</style>
